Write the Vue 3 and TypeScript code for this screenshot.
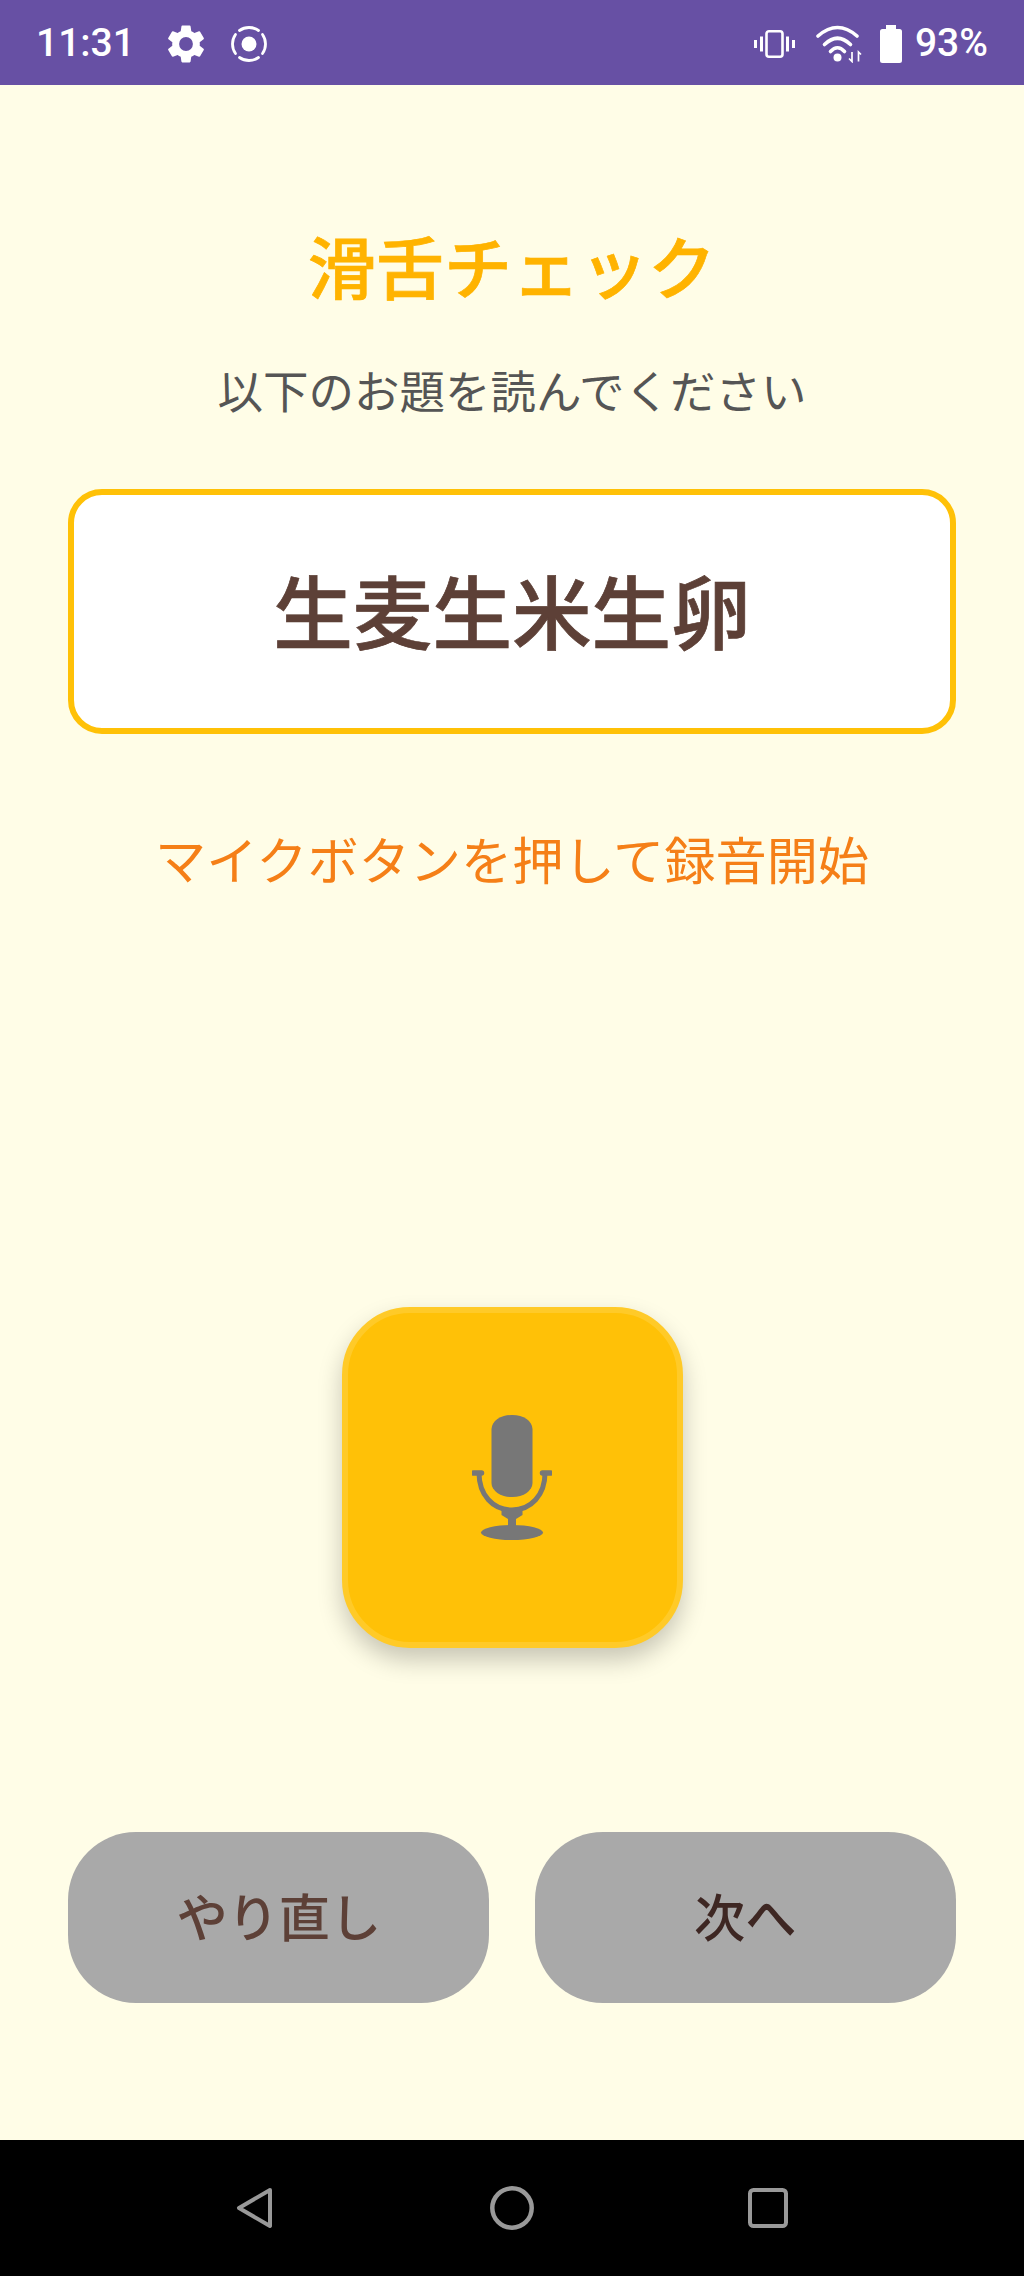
<script setup lang="ts">
const title: string = "滑舌チェック";
const subtitle: string = "以下のお題を読んでください";
const tongueTwister: string = "生麦生米生卵";
const hint: string = "マイクボタンを押して録音開始";
</script>

<template>
  <div class="screen">
    <header class="status-bar">
      <div class="status-left">
        <span class="time">11:31</span>
        <svg class="icon-gear" viewBox="0 0 24 24" fill="#fff">
          <path d="M19.14 12.94c.04-.3.06-.61.06-.94s-.02-.64-.07-.94l2.03-1.58a.49.49 0 0 0 .12-.61l-1.92-3.32a.49.49 0 0 0-.59-.22l-2.39.96a7 7 0 0 0-1.62-.94l-.36-2.54a.48.48 0 0 0-.48-.41h-3.84a.48.48 0 0 0-.47.41l-.36 2.54c-.59.24-1.13.57-1.62.94l-2.39-.96a.49.49 0 0 0-.59.22L2.74 8.87a.48.48 0 0 0 .12.61l2.03 1.58c-.05.3-.09.63-.09.94s.02.64.07.94l-2.03 1.58a.49.49 0 0 0-.12.61l1.92 3.32c.12.22.37.29.59.22l2.39-.96c.5.38 1.03.7 1.62.94l.36 2.54c.05.24.24.41.48.41h3.84c.24 0 .44-.17.47-.41l.36-2.54a7 7 0 0 0 1.62-.94l2.39.96c.22.08.47 0 .59-.22l1.92-3.32a.48.48 0 0 0-.12-.61zM12 15.6A3.6 3.6 0 1 1 12 8.4a3.6 3.6 0 0 1 0 7.2z" />
        </svg>
        <svg class="icon-record" viewBox="0 0 38 38" fill="none" stroke="#fff" stroke-width="2.800" stroke-linecap="round">
          <circle cx="19" cy="19" r="7.500" fill="#fff" stroke="none" />
          <path d="M9.500 5.500a16.500 16.500 0 0 1 19 0" />
          <path d="M32.500 9.500a16.500 16.500 0 0 1 0 19" />
          <path d="M28.500 32.500a16.500 16.500 0 0 1-19 0" />
          <path d="M5.500 28.500a16.500 16.500 0 0 1 0-19" />
        </svg>
      </div>
      <div class="status-right">
        <svg class="icon-vibrate" viewBox="0 0 41 28" fill="none" stroke="#fff">
          <rect x="12.500" y="1.300" width="16" height="25.400" rx="2.500" stroke-width="2.600" />
          <path d="M7.500 6.500v15M1.500 10v8M33.500 6.500v15M39.500 10v8" stroke-width="3" />
        </svg>
        <svg class="icon-wifi" viewBox="0 0 46 38" fill="none" stroke="#fff" stroke-width="3.600" stroke-linecap="round">
          <path d="M2 11Q21.500-6 41 11" />
          <path d="M8.500 19.500Q21.500 7 34.500 19.500" />
          <path d="M14.500 26.500Q21.500 19 28.500 26.500" />
          <circle cx="21.500" cy="32.500" r="4" fill="#fff" stroke="none" />
          <path d="M36 27v9.500L33 33.500M42.500 36.500V27L45 29.500" stroke-width="1.700" stroke-linecap="butt" />
        </svg>
        <svg class="icon-battery" viewBox="0 0 22 38" fill="#fff">
          <path d="M6 0h10v4h3.500A2.500 2.500 0 0 1 22 6.500V35.500A2.500 2.500 0 0 1 19.500 38h-17A2.500 2.500 0 0 1 0 35.500V6.500A2.500 2.500 0 0 1 2.500 4H6z" />
        </svg>
        <span class="battery-text">93%</span>
      </div>
    </header>

    <main class="content">
      <h1 class="title">{{ title }}</h1>
      <p class="subtitle">{{ subtitle }}</p>
      <div class="card">
        <span class="card-text">{{ tongueTwister }}</span>
      </div>
      <p class="hint">{{ hint }}</p>
      <div class="mic-wrap">
        <button class="mic-button" type="button" aria-label="録音">
          <svg class="mic-icon" viewBox="0 0 80 126">
            <rect x="19.500" y="0" width="41" height="82" rx="20" ry="14" fill="#777" />
            <path d="M1.500 58h8M70.500 58h8" stroke="#777" stroke-width="5.500" stroke-linecap="round" fill="none" />
            <path d="M7 58c0 22 14 37 33 37s33-15 33-37" stroke="#777" stroke-width="5" fill="none" />
            <path d="M29.500 93h21v7l-6.500 4v10h-8v-10l-6.500-4z" fill="#777" />
            <ellipse cx="40" cy="117.500" rx="31" ry="7.500" fill="#777" />
          </svg>
        </button>
      </div>
      <div class="actions">
        <button class="action" type="button">やり直し</button>
        <button class="action action-next" type="button">次へ</button>
      </div>
    </main>

    <nav class="nav-bar">
      <svg class="nav-back" viewBox="0 0 37 42" fill="none" stroke="#999" stroke-width="4" stroke-linejoin="round">
        <path d="M34 3L3 21 34 39z" />
      </svg>
      <svg class="nav-home" viewBox="0 0 44 44" fill="none" stroke="#999" stroke-width="4.500">
        <circle cx="22" cy="22" r="19.700" />
      </svg>
      <svg class="nav-recent" viewBox="0 0 40 40" fill="none" stroke="#999" stroke-width="4">
        <rect x="2" y="2" width="36" height="36" rx="3.500" />
      </svg>
    </nav>
  </div>
</template>

<style>
html,
body {
  margin: 0;
  padding: 0;
}
</style>

<style scoped>
.screen {
  width: 1024px;
  height: 2276px;
  display: flex;
  flex-direction: column;
  background: #fffde7;
  font-family: "Noto Sans CJK JP", "Noto Sans", sans-serif;
  overflow: hidden;
}

.status-bar {
  height: 85px;
  flex: none;
  box-sizing: border-box;
  padding: 2px 36px 0;
  background: #6750a4;
  display: flex;
  align-items: center;
  justify-content: space-between;
  color: #fff;
  font-family: Roboto, sans-serif;
}

.status-left,
.status-right {
  display: flex;
  align-items: center;
}

.time {
  font-size: 39px;
  font-weight: 500;
  line-height: 1;
}

.icon-gear {
  width: 46px;
  height: 46px;
  margin-left: 28px;
}

.icon-record {
  width: 38px;
  height: 38px;
  margin-left: 21px;
}

.icon-vibrate {
  width: 41px;
  height: 28px;
}

.icon-wifi {
  width: 46px;
  height: 38px;
  margin-left: 21px;
}

.icon-battery {
  width: 22px;
  height: 38px;
  margin-left: 18px;
}

.battery-text {
  font-size: 39px;
  font-weight: 500;
  margin-left: 13px;
  line-height: 1;
}

.content {
  flex: 1;
  min-height: 0;
  box-sizing: border-box;
  padding: 0 68.300px;
  display: flex;
  flex-direction: column;
  align-items: stretch;
}

.title {
  margin: 134px 0 0;
  font-size: 68px;
  line-height: 92px;
  font-weight: 500;
  -webkit-text-stroke: 0.700px #ffb300;
  text-align: center;
  color: #ffb300;
}

.subtitle {
  margin: 45px 0 0;
  font-size: 45.500px;
  line-height: 66px;
  text-align: center;
  color: #555;
}

.card {
  margin-top: 67px;
  height: 245px;
  box-sizing: border-box;
  border: 6px solid #ffc107;
  border-radius: 34px;
  background: #fff;
  padding-bottom: 6px;
  display: flex;
  align-items: center;
  justify-content: center;
}

.card-text {
  font-size: 79.600px;
  font-weight: 500;
  -webkit-text-stroke: 0.700px #5d4037;
  color: #5d4037;
}

.hint {
  margin: 87px 0 0;
  font-size: 51.200px;
  line-height: 74px;
  text-align: center;
  color: #f57f17;
}

.mic-wrap {
  margin-top: 412px;
  display: flex;
  justify-content: center;
}

.mic-button {
  width: 341px;
  height: 341px;
  padding: 0;
  box-sizing: border-box;
  border: 6px solid #ffca28;
  border-radius: 68px;
  background: #ffc107;
  box-shadow: 0 12px 24px rgba(0, 0, 0, 0.22);
  display: flex;
  align-items: center;
  justify-content: center;
}

.mic-icon {
  width: 80px;
  height: 126px;
}

.actions {
  margin-top: 184px;
  display: flex;
  gap: 45.500px;
}

.action {
  flex: 1;
  height: 171px;
  padding: 0 0 5px;
  border: none;
  border-radius: 68px;
  background: #a9a9a9;
  font-family: inherit;
  font-size: 51.200px;
  font-weight: 500;
  color: #5d4037;
}

.action-next {
  color: #3e2723;
}

.nav-bar {
  height: 136px;
  flex: none;
  background: #000;
  display: flex;
  align-items: center;
}

.nav-back {
  width: 37px;
  height: 42px;
  margin-left: 236px;
}

.nav-home {
  width: 44px;
  height: 44px;
  margin-left: 217px;
}

.nav-recent {
  width: 40px;
  height: 40px;
  margin-left: 214px;
}
</style>
